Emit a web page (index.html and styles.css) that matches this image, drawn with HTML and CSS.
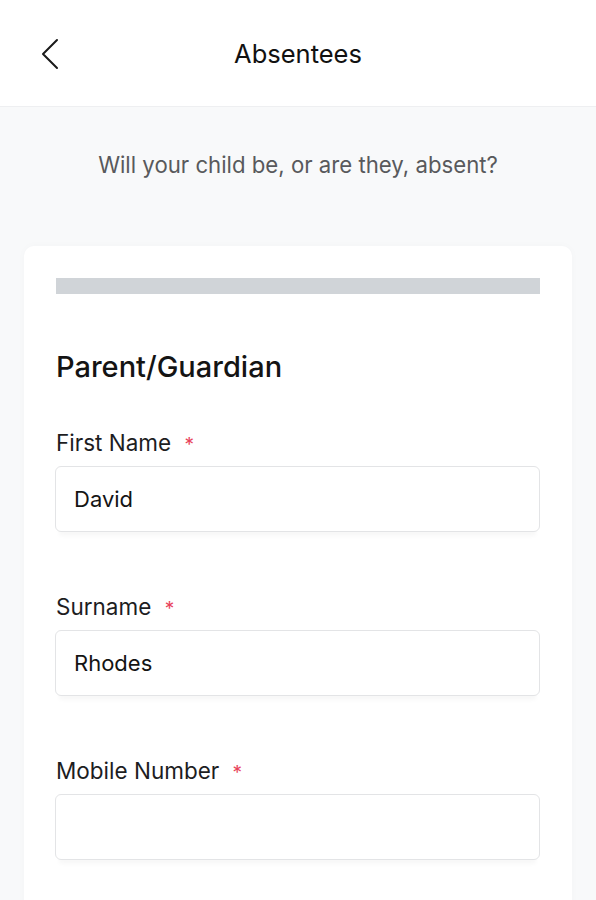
FILE: index.html
```html
<!DOCTYPE html>
<html>
<head>
<meta charset="utf-8">
<link rel="stylesheet" href="styles.css">
</head>
<body>
<header class="topbar">
  <button class="back" aria-label="Back">
    <svg width="20" height="32" viewBox="0 0 20 32"><path d="M17 2 L3 16 L17 30" fill="none" stroke="#1a1a1a" stroke-width="2" stroke-linecap="round" stroke-linejoin="round"/></svg>
  </button>
  <h1 class="title">Absentees</h1>
</header>
<main class="main">
  <p class="intro">Will your child be, or are they, absent?</p>
  <section class="card">
    <div class="progress"></div>
    <h2 class="section-title">Parent/Guardian</h2>
    <div class="field">
      <label class="label">First Name <span class="req">*</span></label>
      <div class="input">David</div>
    </div>
    <div class="field">
      <label class="label">Surname <span class="req">*</span></label>
      <div class="input">Rhodes</div>
    </div>
    <div class="field">
      <label class="label">Mobile Number <span class="req">*</span></label>
      <div class="input"></div>
    </div>
  </section>
</main>
</body>
</html>
```
FILE: styles.css
```css
* { box-sizing: border-box; }
html, body { margin: 0; padding: 0; }
body {
  font-family: Inter, "Noto Sans", sans-serif;
  background: #f8f9fa;
  color: #1d1d1f;
  width: 596px;
  height: 900px;
  overflow: hidden;
}
.topbar {
  height: 107px;
  background: #fff;
  border-bottom: 1px solid #eeeff1;
  display: flex;
  align-items: center;
  justify-content: center;
  position: relative;
}
.back {
  position: absolute;
  left: 40px;
  top: 38px;
  background: none;
  border: 0;
  padding: 0;
  width: 20px;
  height: 32px;
}
.title {
  margin: 0;
  font-size: 25.5px;
  font-weight: 400;
  color: #111;
}
.main { padding: 0 24px; }
.intro {
  margin: 0;
  padding-top: 44px;
  height: 139px;
  text-align: center;
  font-size: 22.2px;
  line-height: 28px;
  color: #58595c;
}
.card {
  background: #fff;
  border-radius: 10px;
  padding: 32px 32px 40px 32px;
  box-shadow: 0 0 8px rgba(0,0,0,0.025);
  height: 700px;
}
.progress {
  height: 16px;
  background: #d0d4d8;
}
.section-title {
  margin: 56px 0 46px 0;
  font-size: 29px;
  line-height: 34px;
  font-weight: 500;
  color: #141414;
}
.field { margin-bottom: 62px; }
.label {
  display: block;
  font-size: 22.5px;
  line-height: 26px;
  color: #1d1d1f;
  margin-bottom: 8px;
}
.req { color: #e8435a; margin-left: 7px; font-size: 19px; }
.input {
  height: 66px;
  width: 485px;
  margin-left: -1px;
  border: 1.5px solid #e3e4e6;
  border-radius: 6px;
  padding: 0 18px;
  display: flex;
  align-items: center;
  font-size: 22px;
  color: #141414;
  box-shadow: 0 8px 4px -4px rgba(0,0,0,0.03);
}
```
